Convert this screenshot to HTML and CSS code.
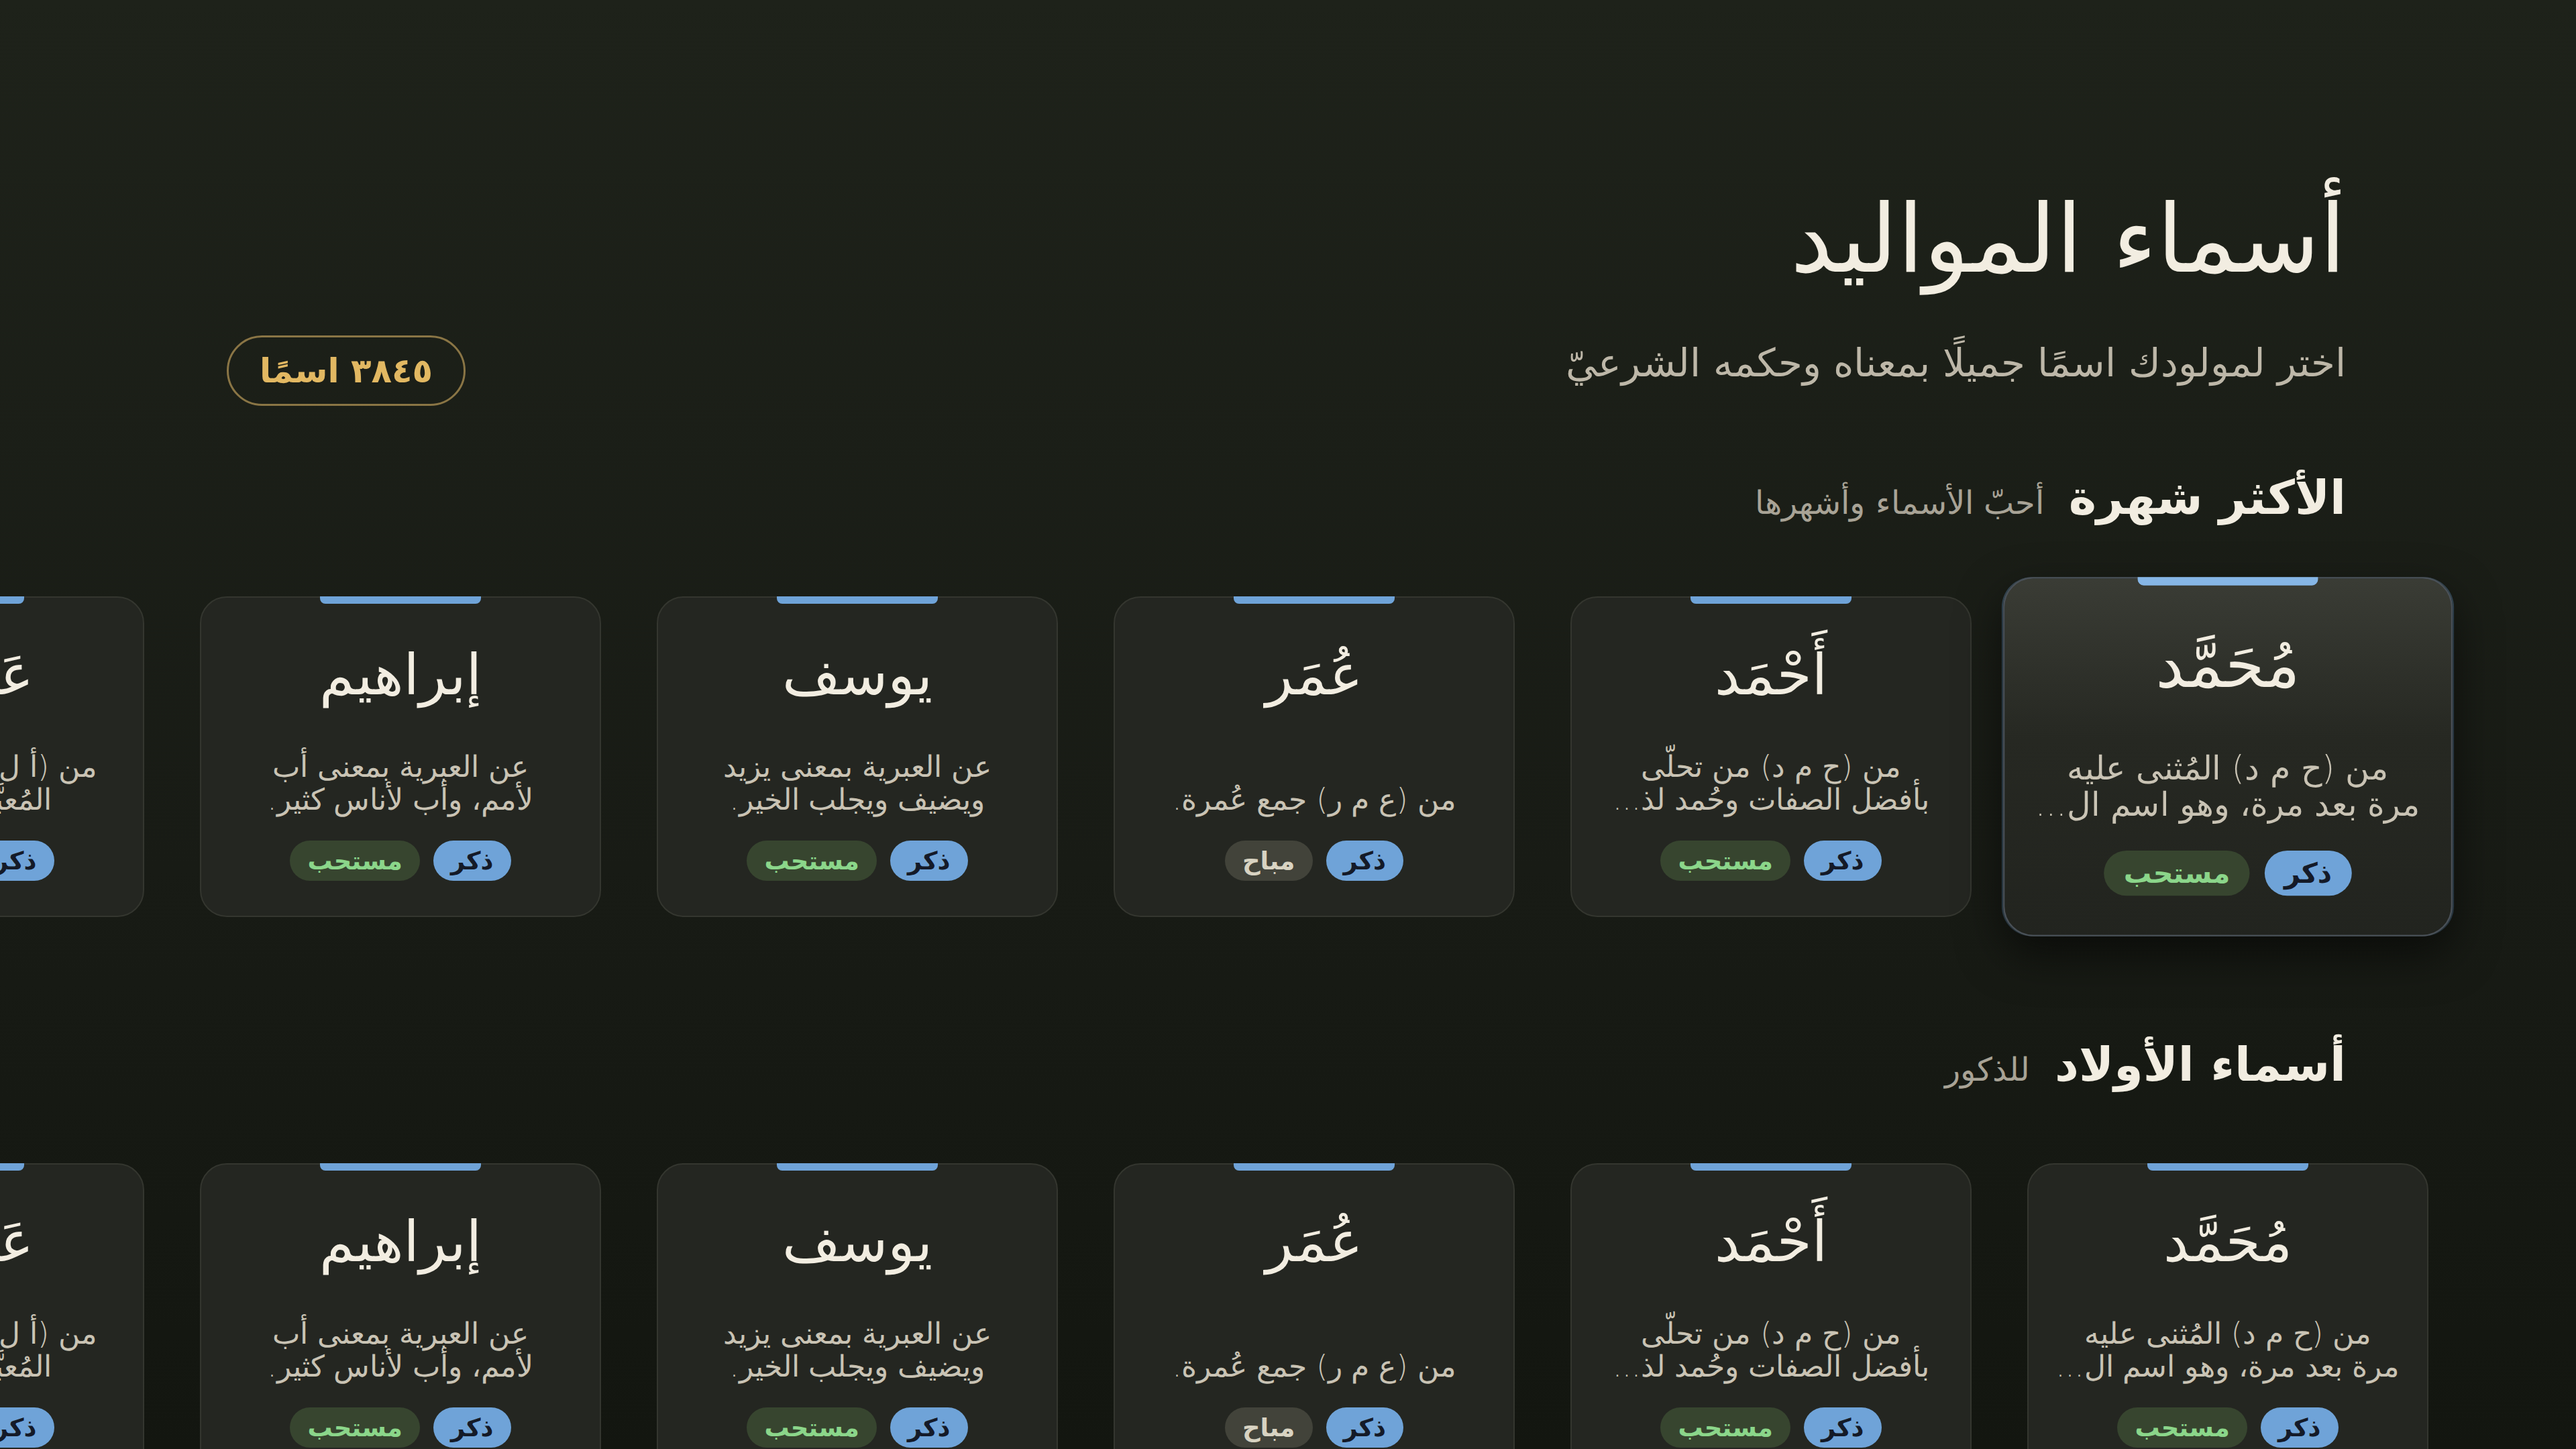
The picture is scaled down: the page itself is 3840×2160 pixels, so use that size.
FILE: index.html
```html
<!DOCTYPE html>
<html lang="ar" dir="rtl">
<head>
  <meta charset="UTF-8">
  <meta name="viewport" content="width=device-width, initial-scale=1.0">
  <title>أسماء المواليد</title>
  <link rel="stylesheet" href="styles.css">
</head>
<body>
<main class="page">
  <header class="hero">
    <div class="hero-text">
      <h1 class="title">أسماء المواليد</h1>
      <p class="lead">اختر لمولودك اسمًا جميلًا بمعناه وحكمه الشرعيّ</p>
    </div>
    <span class="count">٣٨٤٥ اسمًا</span>
  </header>

  <section class="shelf">
    <div class="shelf-head">
      <h2>الأكثر شهرة</h2>
      <span>أحبّ الأسماء وأشهرها</span>
    </div>
    <div class="rail" id="popular"></div>
  </section>

  <section class="shelf">
    <div class="shelf-head">
      <h2>أسماء الأولاد</h2>
      <span>للذكور</span>
    </div>
    <div class="rail" id="boys"></div>
  </section>
</main>

<script>
  const names = [
    { name: 'مُحَمَّد', desc: 'من (ح م د) المُثنى عليه مرة بعد مرة، وهو اسم ال...', hukm: 'مستحب' },
    { name: 'أَحْمَد', desc: 'من (ح م د) من تحلّى بأفضل الصفات وحُمد لذ...', hukm: 'مستحب' },
    { name: 'عُمَر', desc: 'من (ع م ر) جمع عُمرة.', hukm: 'مباح' },
    { name: 'يوسف', desc: 'عن العبرية بمعنى يزيد ويضيف ويجلب الخير.', hukm: 'مستحب' },
    { name: 'إبراهيم', desc: 'عن العبرية بمعنى أب لأمم، وأب لأناس كثير.', hukm: 'مستحب' },
    { name: 'عَبْدُ الله', desc: 'من (أ ل ه) أحبّ الأسماء، المُعبَّد لله وحده...', hukm: 'مستحب' }
  ];

  const hukmClass = { 'مستحب': 'tag-good', 'مباح': 'tag-plain' };

  function renderRail(id, activeIndex) {
    const rail = document.getElementById(id);
    names.forEach(function(item, i) {
      const card = document.createElement('article');
      card.className = 'name-card' + (i === activeIndex ? ' is-active' : '');
      card.innerHTML =
        '<span class="accent"></span>' +
        '<h3 class="name">' + item.name + '</h3>' +
        '<p class="desc">' + item.desc + '</p>' +
        '<div class="tags">' +
          '<span class="tag tag-male">ذكر</span>' +
          '<span class="tag ' + hukmClass[item.hukm] + '">' + item.hukm + '</span>' +
        '</div>';
      rail.appendChild(card);
    });
  }

  // الصف الأول فيه بطاقة محددة (مثل التركيز بالريموت)
  renderRail('popular', 0);
  renderRail('boys', -1);
</script>
</body>
</html>
```

FILE: styles.css
```css
* {
  box-sizing: border-box;
}
html, body {
  margin: 0;
  height: 100%;
}
body {
  font-family: "DejaVu Sans", sans-serif;
  background: linear-gradient(180deg, #1e221a 0%, #181b15 60%, #131610 100%);
  color: #f2ede1;
  overflow: hidden;
}
.page {
  padding-top: 265px;
}
.hero {
  display: flex;
  justify-content: space-between;
  align-items: flex-end;
  padding: 0 343px 0 338px;
}
.title {
  margin: 0;
  font-size: 141px;
  font-weight: 400;
  line-height: 1.3;
}
.lead {
  margin: 50px 0 0;
  font-size: 58px;
  font-weight: 200;
  line-height: 1.5;
  color: #bdb7a8;
}
.count {
  display: inline-flex;
  align-items: center;
  height: 105px;
  margin-bottom: -20px;
  padding: 0 46px;
  border: 3px solid #8a7545;
  border-radius: 53px;
  color: #e2b862;
  font-size: 50px;
  font-weight: 700;
}
.shelf {
  margin-top: 108px;
}
.shelf + .shelf {
  margin-top: 171px;
}
.shelf-head {
  display: flex;
  align-items: baseline;
  gap: 37px;
  padding: 0 343px;
}
.shelf-head h2 {
  margin: 0;
  font-size: 70px;
  font-weight: 700;
  line-height: 1.4;
}
.shelf-head span {
  font-size: 48px;
  font-weight: 200;
  color: #a8a396;
}
.rail {
  display: flex;
  gap: 83px;
  padding: 0 220px;
  margin-top: 98px;
}
.name-card {
  position: relative;
  flex: 0 0 598px;
  height: 478px;
  display: flex;
  flex-direction: column;
  align-items: center;
  padding: 40px 37px 0;
  background: #242621;
  border: 2px solid #34362f;
  border-radius: 40px;
  text-align: center;
}
.accent {
  position: absolute;
  top: -2px;
  left: 50%;
  width: 240px;
  height: 11px;
  margin-left: -120px;
  background: #6fa3d8;
  border-radius: 0 0 8px 8px;
}
.name {
  margin: 0;
  font-size: 84px;
  font-weight: 400;
  line-height: 150px;
}
.desc {
  margin: 37px 0 0;
  height: 98px;
  display: flex;
  align-items: flex-end;
  justify-content: center;
  font-size: 44px;
  font-weight: 200;
  line-height: 49px;
  color: #c9c3b4;
  text-wrap: balance;
}
.tags {
  display: flex;
  gap: 20px;
  margin-top: 37px;
}
.tag {
  display: inline-flex;
  align-items: center;
  height: 60px;
  padding: 0 26px;
  border-radius: 30px;
  font-size: 37px;
  font-weight: 700;
}
.tag-male {
  background: #6fa3d8;
  color: #141a28;
}
.tag-good {
  background: #37452f;
  color: #8bd68a;
}
.tag-plain {
  background: #42433a;
  color: #d8d3c2;
}
.name-card.is-active {
  transform: scale(1.12);
  background: linear-gradient(180deg, #3a3c35 0%, #262822 45%, #22241f 100%);
  border-color: #4a5158;
  box-shadow: 0 24px 60px rgba(0, 0, 0, 0.55), -2px 0 0 rgba(111, 163, 216, 0.35), 2px 0 0 rgba(111, 163, 216, 0.35);
  z-index: 2;
}
.name-card.is-active .accent {
  background: #86b6e6;
}
```
